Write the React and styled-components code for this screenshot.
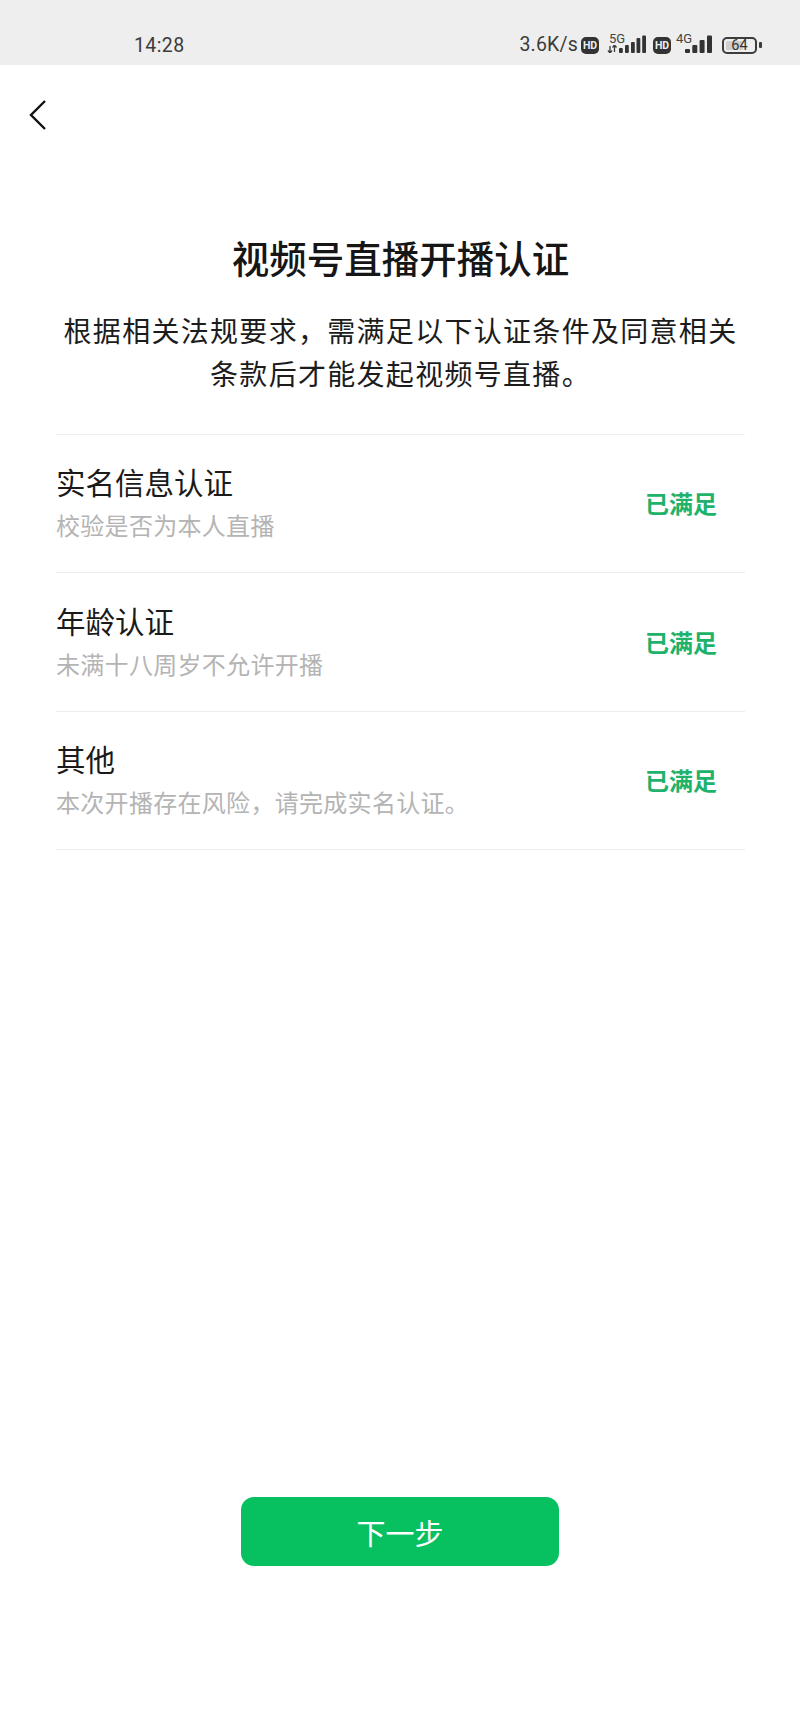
import React from "react";
import styled, { createGlobalStyle } from "styled-components";

const GlobalStyle = createGlobalStyle`
  html, body {
    margin: 0;
    padding: 0;
    background: #fff;
  }
  * {
    box-sizing: border-box;
  }
`;

const cjk = `"Noto Sans CJK SC", "Noto Sans", sans-serif`;

const Page = styled.div`
  width: 800px;
  height: 1731px;
  display: flex;
  flex-direction: column;
  background: #fff;
  font-family: ${cjk};
  overflow: hidden;
`;

const StatusBar = styled.div`
  height: 65px;
  flex: none;
  display: flex;
  align-items: center;
  padding: 0 38px 0 134px;
  background: #eeeeee;
  color: #3c3c3c;
  font-family: Roboto, "Liberation Sans", sans-serif;
`;

const Time = styled.div`
  font-size: 19.5px;
  letter-spacing: 0.4px;
  margin-top: 26px;
  line-height: 22px;
`;

const StatusRight = styled.div`
  margin-left: auto;
  margin-top: 25px;
  display: flex;
  align-items: center;
  height: 22px;
`;

const Speed = styled.div`
  font-size: 19.5px;
  line-height: 22px;
  letter-spacing: 0.2px;
`;

const HdBadge = styled.span`
  width: 18px;
  height: 17px;
  margin-left: ${(p) => p.$gap}px;
  border-radius: 5px;
  background: #333;
  color: #eee;
  font: 700 10.5px/17px Roboto, sans-serif;
  text-align: center;
`;

const NetworkGroup = styled.div`
  position: relative;
  width: 41px;
  height: 20px;
  margin-left: ${(p) => p.$gap}px;
  padding-bottom: 2px;
  display: flex;
  justify-content: flex-end;
  align-items: flex-end;
`;

const NetworkLabel = styled.span`
  position: absolute;
  left: ${(p) => p.$left}px;
  top: -2px;
  font-size: 13px;
  line-height: 12px;
  color: #444;
`;

const Battery = styled.div`
  width: 35px;
  height: 17px;
  margin-left: 10px;
  padding: 2px;
  border: 2px solid #3c3c3c;
  border-radius: 5px;
  position: relative;
  display: flex;
`;

const BatteryFill = styled.div`
  flex: none;
  height: 100%;
  border-radius: 1px;
  background: #cfcfcf;
`;

const BatteryText = styled.span`
  position: absolute;
  inset: 0;
  text-align: center;
  font-size: 14.5px;
  line-height: 13px;
  color: #333;
`;

const BatteryNub = styled.div`
  width: 3px;
  height: 6px;
  margin-left: 2px;
  border-radius: 1px;
  background: #3c3c3c;
`;

const NavBar = styled.div`
  height: 100px;
  flex: none;
  padding: 34px 0 0 29px;
`;

const BackButton = styled.button`
  display: block;
  width: 18px;
  height: 32px;
  padding: 0;
  border: 0;
  background: none;
`;

const Content = styled.main`
  flex: 1;
  display: flex;
  flex-direction: column;
  padding: 64px 55px 0 56px;
`;

const Title = styled.h1`
  margin: 0;
  font-size: 37.5px;
  line-height: 56px;
  font-weight: 500;
  color: #161616;
  text-align: center;
`;

const Description = styled.p`
  margin: 24px 0 0;
  font-size: 28px;
  line-height: 43px;
  letter-spacing: 1.3px;
  color: #1c1c1c;
  text-align: center;
`;

const List = styled.div`
  margin-top: 38.5px;
  border-top: 1px solid #eeeeee;
`;

const Row = styled.div`
  height: 138.5px;
  display: flex;
  align-items: center;
  justify-content: space-between;
  border-bottom: 1px solid #ececec;
`;

const RowText = styled.div`
  display: flex;
  flex-direction: column;
  gap: 5px;
  margin-bottom: 3px;
`;

const RowTitle = styled.div`
  font-size: 29.5px;
  line-height: 42px;
  color: #1a1a1a;
`;

const RowHint = styled.div`
  font-size: 24px;
  line-height: 36px;
  letter-spacing: 0.3px;
  color: #b4b4b4;
`;

const RowStatus = styled.div`
  margin-right: 28px;
  font-size: 24px;
  line-height: 34px;
  font-weight: 700;
  color: #1fb26b;
`;

const Footer = styled.div`
  flex: none;
  display: flex;
  justify-content: center;
  padding-bottom: 165px;
`;

const NextButton = styled.button`
  width: 318px;
  height: 69px;
  border: 0;
  border-radius: 13px;
  background: #07c160;
  color: #fff;
  font-family: ${cjk};
  font-size: 29px;
`;

const SignalBars = ({ width, barWidth, bars }) => (
  <svg width={width} height="18" viewBox={`0 0 ${width} 18`} style={{ display: "block" }}>
    {bars.map(([x, h]) => (
      <rect key={x} x={x} y={18 - h} width={barWidth} height={h} rx="1" fill="#333" />
    ))}
  </svg>
);

const DataArrows = () => (
  <svg
    width="11"
    height="8"
    viewBox="0 0 11 8"
    style={{ position: "absolute", left: 2, bottom: 2 }}
    fill="none"
    stroke="#3c3c3c"
    strokeWidth="1.3"
  >
    <path d="M3 8V1M1 5.5 3 8l2-2.5" />
    <path d="M7.5 0v7M5.5 2.5 7.5 0l2 2.5" />
  </svg>
);

const rows = [
  { title: "实名信息认证", hint: "校验是否为本人直播" },
  { title: "年龄认证", hint: "未满十八周岁不允许开播" },
  { title: "其他", hint: "本次开播存在风险，请完成实名认证。" },
];

export default function App() {
  return (
    <>
      <GlobalStyle />
      <Page>
        <StatusBar>
          <Time>14:28</Time>
          <StatusRight>
            <Speed>3.6K/s</Speed>
            <HdBadge $gap={3}>HD</HdBadge>
            <NetworkGroup $gap={6}>
              <NetworkLabel $left={4}>5G</NetworkLabel>
              <DataArrows />
              <SignalBars
                width={27}
                barWidth={3.8}
                bars={[
                  [0, 5],
                  [6, 8],
                  [12, 11],
                  [17.5, 15],
                  [23.2, 17.5],
                ]}
              />
            </NetworkGroup>
            <HdBadge $gap={7}>HD</HdBadge>
            <NetworkGroup $gap={0}>
              <NetworkLabel $left={5}>4G</NetworkLabel>
              <SignalBars
                width={27}
                barWidth={5}
                bars={[
                  [0, 4],
                  [7.3, 8],
                  [14.6, 13],
                  [22, 17.5],
                ]}
              />
            </NetworkGroup>
            <Battery>
              <BatteryFill style={{ width: "64%" }} />
              <BatteryText>64</BatteryText>
            </Battery>
            <BatteryNub />
          </StatusRight>
        </StatusBar>
        <NavBar>
          <BackButton aria-label="back">
            <svg width="18" height="32" viewBox="0 0 18 32" fill="none" stroke="#111" strokeWidth="2.4">
              <path d="M16 2 2 16l14 14" />
            </svg>
          </BackButton>
        </NavBar>
        <Content>
          <Title>视频号直播开播认证</Title>
          <Description>根据相关法规要求，需满足以下认证条件及同意相关条款后才能发起视频号直播。</Description>
          <List>
            {rows.map((row) => (
              <Row key={row.title}>
                <RowText>
                  <RowTitle>{row.title}</RowTitle>
                  <RowHint>{row.hint}</RowHint>
                </RowText>
                <RowStatus>已满足</RowStatus>
              </Row>
            ))}
          </List>
        </Content>
        <Footer>
          <NextButton>下一步</NextButton>
        </Footer>
      </Page>
    </>
  );
}
